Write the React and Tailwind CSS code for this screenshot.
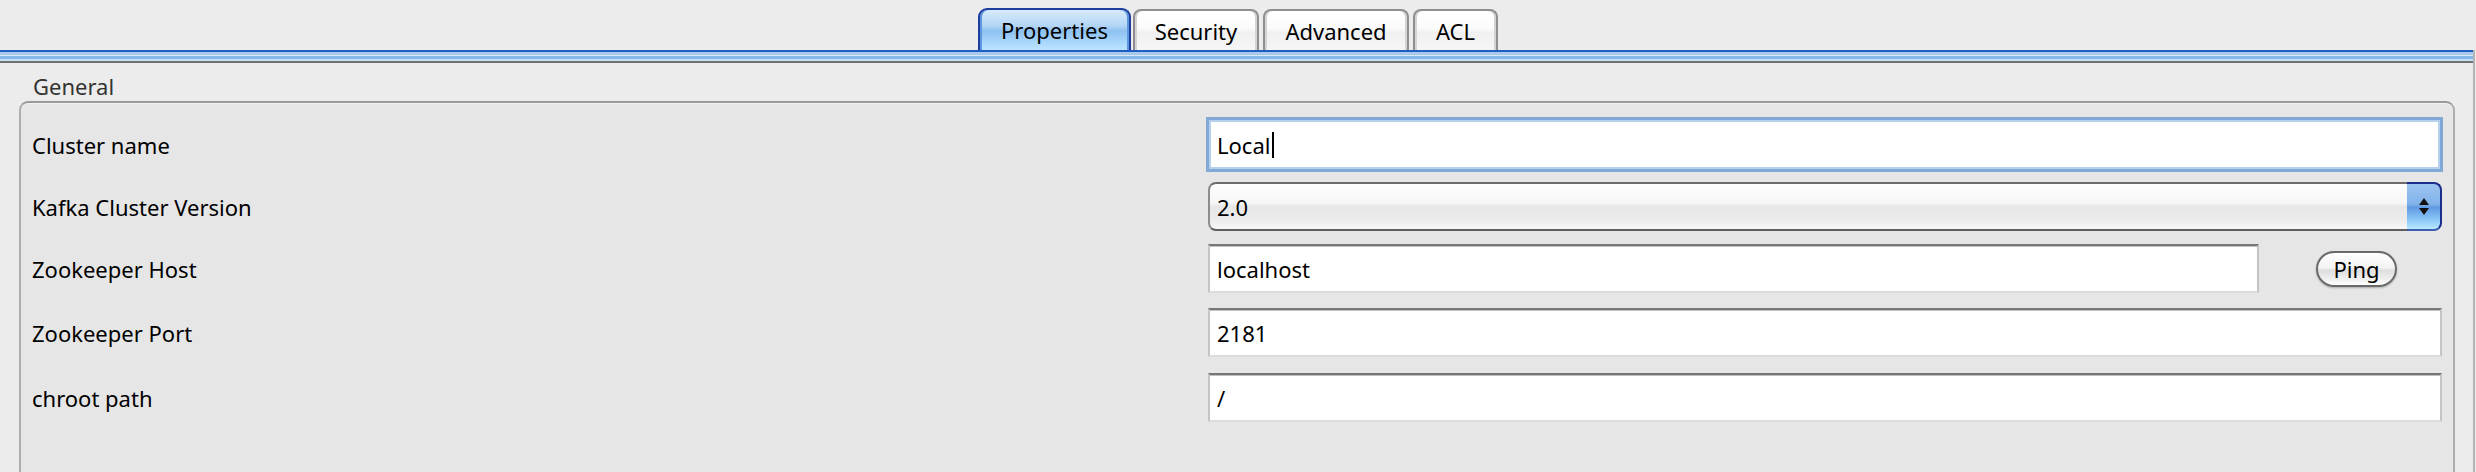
import React from "react";

const tabs = [
  { label: "Properties", w: "w-[153px]", gap: "", active: true },
  { label: "Security", w: "w-[126px]", gap: "ml-[2px]" },
  { label: "Advanced", w: "w-[146px]", gap: "ml-[4px]" },
  { label: "ACL", w: "w-[85px]", gap: "ml-[4px]" },
];

function Tab({ label, w, gap, active }) {
  if (active) {
    return (
      <div
        className={`${w} ${gap} h-[42px] flex items-center justify-center rounded-t-[9px] border-2 border-b-0 border-[#1d3e9e] bg-[linear-gradient(to_bottom,#d9ebfc_0%,#b2d5f6_40%,#8ec1f0_52%,#a3d2fa_75%,#bce5ff_100%)] shadow-[inset_2px_0_0_#5f97de,inset_-2px_0_0_#5f97de] text-black`}
      >
        {label}
      </div>
    );
  }
  return (
    <div
      className={`${w} ${gap} h-[41px] flex items-center justify-center rounded-t-[8px] border-2 border-b-0 border-[#8f8f8f] bg-[linear-gradient(to_bottom,#ffffff_0%,#fbfbfb_45%,#f0f0f0_55%,#f6f6f6_100%)] shadow-[inset_2px_0_0_#d4d4d4,inset_-2px_0_0_#d4d4d4] text-black`}
    >
      {label}
    </div>
  );
}

function TextField({ value, className = "" }) {
  return (
    <div
      className={`flex h-[49px] items-center bg-white border-2 border-t-[#767676] border-x-[#c4c4c4] border-b-[#dcdcdc] shadow-[inset_0_1px_0_#c0c0c0] pl-[7px] text-black ${className}`}
    >
      {value}
    </div>
  );
}

function Row({ label, className, children }) {
  return (
    <div className={`flex items-center pr-[11px] ${className}`}>
      <div className="w-[1187px] shrink-0 pl-[11px] text-black">{label}</div>
      <div className="flex-1 flex items-center">{children}</div>
    </div>
  );
}

export default function App() {
  return (
    <div className="w-[2476px] h-[472px] overflow-hidden bg-[#ececec] flex flex-col font-['Noto_Sans','DejaVu_Sans',sans-serif] text-[22px] leading-none">
      {/* Tab strip */}
      <div className="h-[50px] shrink-0 flex items-end justify-center">
        {tabs.map((t) => (
          <Tab key={t.label} {...t} />
        ))}
      </div>

      <div className="flex-1 flex flex-col mr-[1px] border-r-2 border-[#b4b4b4]">
        {/* Tab pane edge */}
        <div className="shrink-0 flex flex-col">
          <div className="h-[2px] bg-[#1f5cc4]" />
          <div className="h-[3px] bg-[#a9c9eb]" />
          <div className="h-[1px] bg-[#dbe9f7]" />
          <div className="h-[3px] bg-[#88b8ea]" />
          <div className="h-[2px] bg-[#c4dffa]" />
          <div className="h-[2px] bg-[#717171]" />
        </div>

        {/* Content */}
        <div className="flex-1 flex flex-col pl-[19px] pr-[18px]">
          <div className="mt-[9px] mb-[1px] pl-[14px] leading-[28px] text-[#333333]">
            General
          </div>
          <div className="h-[420px] shrink-0 flex flex-col rounded-[9px] border-2 border-[#adadad] border-t-[#9a9a9a] bg-[#e6e6e6] shadow-[inset_0_1px_0_#f2f2f2]">
            <Row label="Cluster name" className="mt-[14px] h-[55px]">
              <div className="flex-1 -ml-[2px] -mr-[1px] h-[55px] flex items-center bg-white border-[3px] border-[#82a8d6] shadow-[inset_0_0_0_2px_#b6d0ed] pl-[8px] text-black">
                Local
                <span className="ml-[2px] w-[2px] h-[26px] bg-black" />
              </div>
            </Row>

            <Row label="Kafka Cluster Version" className="mt-[10px] h-[49px]">
              <div className="flex-1 h-[49px] flex">
                <div className="flex-1 flex items-center pl-[7px] rounded-l-[8px] border-2 border-r-0 border-[#8c8c8c] border-t-[#6c6c6c] border-b-[#5f5f5f] bg-[linear-gradient(to_bottom,#fdfdfd_0%,#f6f6f6_42%,#e7e7e7_50%,#ececec_80%,#f7f7f7_100%)] text-black">
                  2.0
                </div>
                <div className="w-[35px] flex flex-col items-center justify-center gap-[3px] rounded-r-[8px] border-2 border-l-0 border-[#1c2d8c] border-b-[#3b5db0] bg-[linear-gradient(to_bottom,#9cc4f0_0%,#80b2ea_45%,#5f9ae2_52%,#8cc9f7_80%,#b6e8ff_100%)]">
                  <svg width="10" height="7" viewBox="0 0 10 7">
                    <path d="M5 0 L10 7 L0 7 Z" fill="#111" />
                  </svg>
                  <svg width="10" height="7" viewBox="0 0 10 7">
                    <path d="M0 0 L10 0 L5 7 Z" fill="#111" />
                  </svg>
                </div>
              </div>
            </Row>

            <Row label="Zookeeper Host" className="mt-[13px] h-[49px]">
              <TextField value="localhost" className="w-[1051px]" />
              <button className="ml-[57px] w-[81px] h-[36px] flex items-center justify-center rounded-full border-2 border-[#6a6a6a] bg-[linear-gradient(to_bottom,#ffffff_0%,#f4f4f4_45%,#dedede_55%,#f2f2f2_85%,#ffffff_100%)] shadow-[0_1px_2px_rgba(0,0,0,0.25)] text-black">
                Ping
              </button>
            </Row>

            <Row label="Zookeeper Port" className="mt-[15px] h-[49px]">
              <TextField value="2181" className="flex-1" />
            </Row>

            <Row label="chroot path" className="mt-[16px] h-[49px]">
              <TextField value="/" className="flex-1" />
            </Row>
          </div>
        </div>
      </div>
    </div>
  );
}
